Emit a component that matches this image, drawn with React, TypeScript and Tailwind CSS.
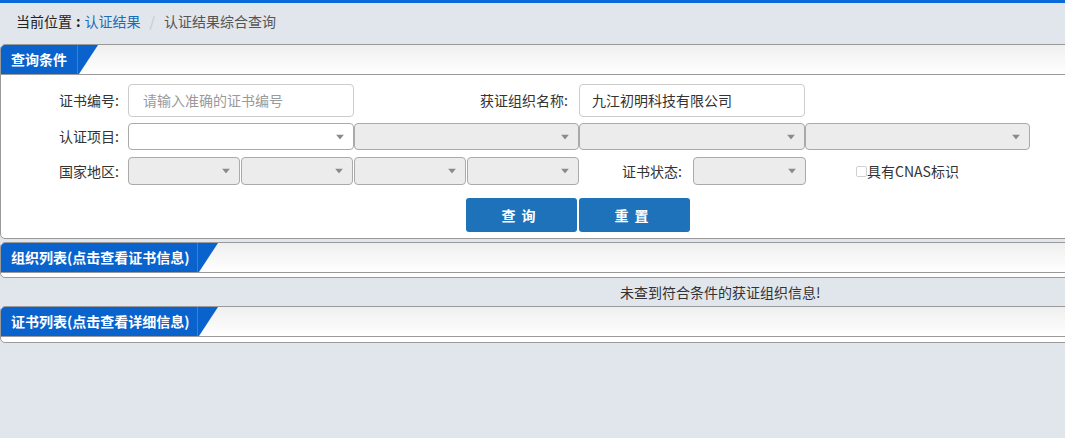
import React from "react";

const font = { fontFamily: '"Noto Sans CJK SC", "Liberation Sans", sans-serif' };

function Arrow() {
  return (
    <svg width="8" height="5" viewBox="0 0 8 5" className="absolute right-[9px] top-1/2 -translate-y-1/2">
      <path d="M0 0 L8 0 L4 5 Z" fill="#8a8a8a" />
    </svg>
  );
}

function Select({ w, white, h = "h-[27px]" }: { w: string; white?: boolean; h?: string }) {
  return (
    <div
      className={`relative ${w} ${h} shrink-0 rounded-[4px] border border-[#aaaaaa] ${
        white ? "bg-white" : "bg-[#ececec]"
      }`}
    >
      <Arrow />
    </div>
  );
}

function PanelHeader({ title, tabW }: { title: string; tabW: string }) {
  return (
    <div className="flex h-[29px] bg-gradient-to-b from-[#efefef] to-white">
      <div
        className={`flex ${tabW} items-center rounded-tl-[4px] border-r border-[#3d7fcf] bg-[#0a63cc] pl-[10px] text-[14px] font-bold text-white`}
      >
        {title}
      </div>
      <svg width="20" height="29" viewBox="0 0 20 29" className="shrink-0">
        <path d="M0 0 L20 0 L1 29 L0 29 Z" fill="#0a63cc" />
      </svg>
    </div>
  );
}

export default function App() {
  return (
    <div className="min-h-[438px] overflow-hidden bg-[#e1e5ec] text-[#333]" style={font}>
      <div className="h-[3px] bg-[#0b69d9]" />
      <div className="flex h-[41px] items-start pl-[16px] pt-[8px] text-[14px] leading-[20px]">
        <span className="text-[#222]">当前位置</span>
        <span className="px-[4px] font-bold text-[#222]">:</span>
        <span className="text-[#1a6eb8]">认证结果</span>
        <span className="mx-[9px] text-[#c8c8c8]">/</span>
        <span className="text-[#555]">认证结果综合查询</span>
      </div>

      {/* 查询条件 */}
      <div className="-mr-2 rounded-l-[5px] border border-[#9a9a9a] bg-white">
        <div className="border-b border-[#9a9a9a]">
          <PanelHeader title="查询条件" tabW="w-[77px]" />
        </div>
        <div className="pb-[6px] pt-[9px] text-[14px]">
          <div className="flex items-center">
            <div className="w-[127px] shrink-0 pr-[9px] text-right">证书编号:</div>
            <div className="flex h-[33px] w-[226px] shrink-0 items-center rounded-[4px] border border-[#cccccc] pl-[14px] text-[#9a9a9a]">
              请输入准确的证书编号
            </div>
            <div className="w-[225px] shrink-0 pr-[11px] text-right">获证组织名称:</div>
            <div className="flex h-[33px] w-[226px] shrink-0 items-center rounded-[4px] border border-[#cccccc] pl-[12px] text-[#333]">
              九江初明科技有限公司
            </div>
          </div>

          <div className="mt-[6px] flex items-center">
            <div className="w-[127px] shrink-0 pr-[9px] text-right">认证项目:</div>
            <Select w="w-[226px]" white />
            <Select w="w-[225px]" />
            <Select w="w-[226px]" />
            <Select w="w-[225px]" />
          </div>

          <div className="mt-[7px] flex items-center">
            <div className="w-[127px] shrink-0 pr-[9px] text-right">国家地区:</div>
            <div className="flex gap-[1px]">
              <Select w="w-[112px]" h="h-[28px]" />
              <Select w="w-[112px]" h="h-[28px]" />
              <Select w="w-[112px]" h="h-[28px]" />
              <Select w="w-[112px]" h="h-[28px]" />
            </div>
            <div className="w-[114px] shrink-0 pr-[11px] text-right">证书状态:</div>
            <Select w="w-[113px]" h="h-[28px]" />
            <div className="flex items-center pl-[50px]">
              <span className="inline-block h-[11px] w-[11px] rounded-[2px] border border-[#d0d0d0] bg-white" />
              <span>具有CNAS标识</span>
            </div>
          </div>

          <div className="mt-[13px] flex gap-[2px] pl-[465px]">
            <button className="h-[34px] w-[111px] rounded-[3px] bg-[#1e72ba] text-[14px] font-bold tracking-[6px] text-white">
              查询
            </button>
            <button className="h-[34px] w-[111px] rounded-[3px] bg-[#1e72ba] text-[14px] font-bold tracking-[6px] text-white">
              重置
            </button>
          </div>
        </div>
      </div>

      {/* 组织列表 */}
      <div className="-mr-2 mt-[3px] rounded-l-[5px] border border-[#9a9a9a] bg-white">
        <div className="border-b border-[#9a9a9a]">
          <PanelHeader title="组织列表(点击查看证书信息)" tabW="w-[197px]" />
        </div>
        <div className="h-[4px]" />
      </div>
      <div className="flex h-[28px] items-center pl-[620px] text-[14px] text-[#333]">
        未查到符合条件的获证组织信息!
      </div>

      {/* 证书列表 */}
      <div className="-mr-2 rounded-l-[5px] border border-[#9a9a9a] bg-white">
        <div className="border-b border-[#9a9a9a]">
          <PanelHeader title="证书列表(点击查看详细信息)" tabW="w-[197px]" />
        </div>
        <div className="h-[5px]" />
      </div>
    </div>
  );
}
